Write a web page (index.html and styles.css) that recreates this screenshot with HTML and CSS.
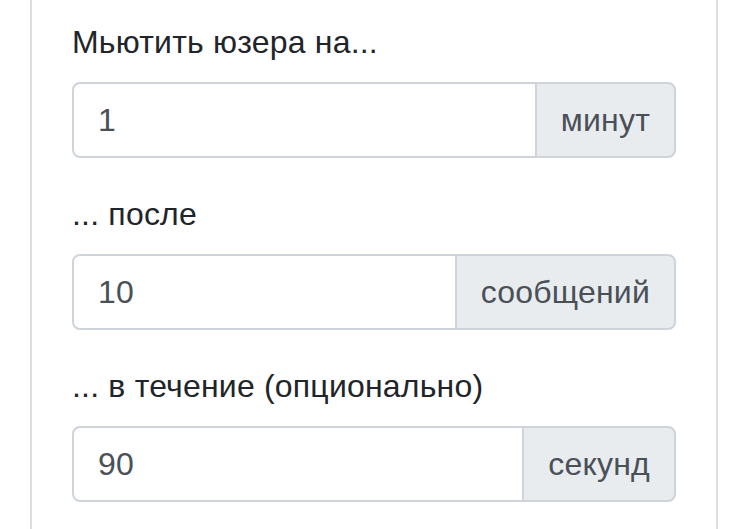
FILE: index.html
```html
<!DOCTYPE html>
<html lang="ru">
<head>
  <meta charset="UTF-8" />
  <meta name="viewport" content="width=device-width, initial-scale=1" />
  <title>Мьют</title>
  <link rel="stylesheet" href="styles.css">
</head>
<body>
  <div class="card">
    <div class="form-group">
      <label for="muteTime">Мьютить юзера на...</label>
      <div class="input-group">
        <input id="muteTime" type="text" value="1">
        <span class="addon">минут</span>
      </div>
    </div>
    <div class="form-group">
      <label for="msgCount">... после</label>
      <div class="input-group">
        <input id="msgCount" type="text" value="10">
        <span class="addon">сообщений</span>
      </div>
    </div>
    <div class="form-group">
      <label for="period">... в течение (опционально)</label>
      <div class="input-group">
        <input id="period" type="text" value="90">
        <span class="addon">секунд</span>
      </div>
    </div>
  </div>
</body>
</html>
```

FILE: styles.css
```css
body {
  margin: 0;
  font-family: "Liberation Sans", Arial, sans-serif;
  letter-spacing: 0.2px;
  background-color: #fff;
  color: #212529;
  overflow: hidden;
}

.card {
  margin-left: 30px;
  width: 604px;
  min-height: 100vh;
  padding: 18px 40px 0;
  border-left: 2px solid #dedede;
  border-right: 2px solid #dedede;
  box-sizing: content-box;
}

.form-group {
  margin-bottom: 32px;
}

label {
  display: block;
  font-size: 32px;
  line-height: 48px;
  margin-bottom: 16px;
}

.input-group {
  display: flex;
}

.input-group input {
  flex: 1;
  min-width: 0;
  height: 76px;
  box-sizing: border-box;
  padding: 12px 24px;
  font-family: inherit;
  font-size: 32px;
  line-height: 48px;
  letter-spacing: inherit;
  color: #495057;
  border: 2px solid #ced4da;
  border-radius: 8px 0 0 8px;
  outline: none;
}

.addon {
  display: flex;
  align-items: center;
  margin-left: -2px;
  padding: 12px 24px;
  font-size: 32px;
  line-height: 48px;
  color: #495057;
  background-color: #e9ecef;
  border: 2px solid #ced4da;
  border-radius: 0 8px 8px 0;
}
```
